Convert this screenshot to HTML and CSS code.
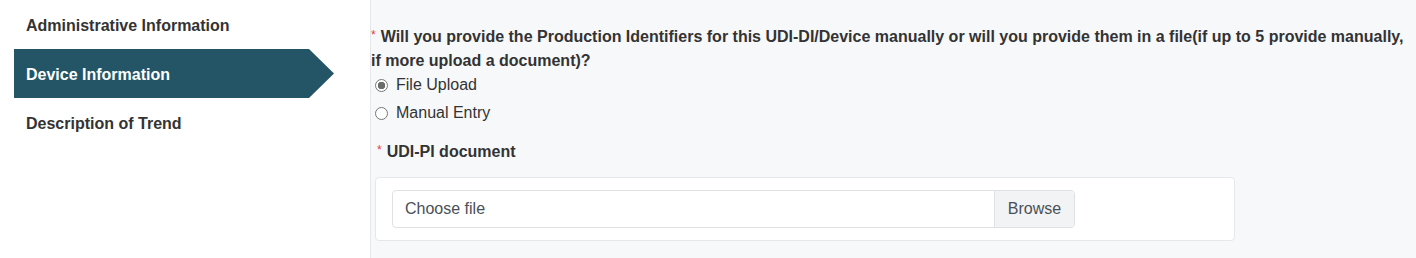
FILE: index.html
```html
<!DOCTYPE html>
<html>
<head>
<meta charset="utf-8">
<link rel="stylesheet" href="styles.css">
</head>
<body>
<div class="page">
  <nav class="sidebar">
    <div class="nav-item">Administrative Information</div>
    <div class="nav-item active">Device Information</div>
    <div class="nav-item">Description of Trend</div>
  </nav>
  <main class="content">
    <div class="question required">Will you provide the Production Identifiers for this UDI-DI/Device manually or will you provide them in a file(if up to 5 provide manually, if more upload a document)?</div>
    <label class="radio-row"><input type="radio" name="mode" checked> File Upload</label>
    <label class="radio-row"><input type="radio" name="mode"> Manual Entry</label>
    <div class="field-label required">UDI-PI document</div>
    <div class="card">
      <div class="file-input">
        <div class="file-name">Choose file</div>
        <div class="file-btn">Browse</div>
      </div>
    </div>
  </main>
</div>
</body>
</html>
```

FILE: styles.css
```css
* { box-sizing: border-box; }
html, body { margin: 0; padding: 0; height: 100%; }
body {
  font-family: "Liberation Sans", Arial, sans-serif;
  color: #333;
  background: #fff;
}
.page {
  display: flex;
  height: 258px;
}
.sidebar {
  width: 371px;
  flex: none;
  border-right: 1px solid #e6e8eb;
  padding-left: 14px;
  background: #fff;
}
.nav-item {
  height: 49px;
  line-height: 49px;
  padding-top: 1px;
  padding-left: 12px;
  font-size: 16px;
  font-weight: bold;
  color: #333;
  width: 320px;
}
.nav-item.active {
  background: #235566;
  color: #fff;
  clip-path: polygon(0 0, 295px 0, 320px 50%, 295px 100%, 0 100%);
}
.content {
  flex: 1;
  background: #f7f8fa;
  padding: 25px 6px 0 0;
}
.question {
  font-size: 16px;
  font-weight: bold;
  line-height: 24px;
  color: #333;
}
.required::before {
  content: "*";
  color: #e8383d;
  font-size: 12px;
  font-weight: normal;
  vertical-align: top;
  line-height: 20px;
  margin-right: 5px;
}
.radio-row {
  display: flex;
  align-items: center;
  height: 24px;
  font-size: 16px;
  color: #333;
  margin-bottom: 4px;
}
.radio-row input {
  appearance: none;
  -webkit-appearance: none;
  margin: 0 8px 0 4px;
  width: 13px;
  height: 13px;
  border: 1px solid #777;
  border-radius: 50%;
  background: #fff;
}
.radio-row input:checked {
  background: radial-gradient(circle, #6b6b6b 0 3.5px, #fff 4px);
}
.field-label {
  font-size: 16px;
  font-weight: bold;
  line-height: 24px;
  padding-left: 6px;
  margin-top: 15px;
}
.card {
  margin: 13px 0 0 4px;
  width: 860px;
  background: #fff;
  border: 1px solid #e5e7eb;
  border-radius: 4px;
  padding: 12px 16px;
}
.file-input {
  display: flex;
  width: 683px;
  height: 38px;
  border: 1px solid #dfe1e5;
  border-radius: 4px;
  overflow: hidden;
  font-size: 16px;
}
.file-name {
  flex: 1;
  padding-left: 12px;
  line-height: 36px;
  color: #495057;
}
.file-btn {
  width: 80px;
  border-left: 1px solid #dfe1e5;
  background: #f2f3f5;
  line-height: 36px;
  text-align: center;
  color: #495057;
}
```
